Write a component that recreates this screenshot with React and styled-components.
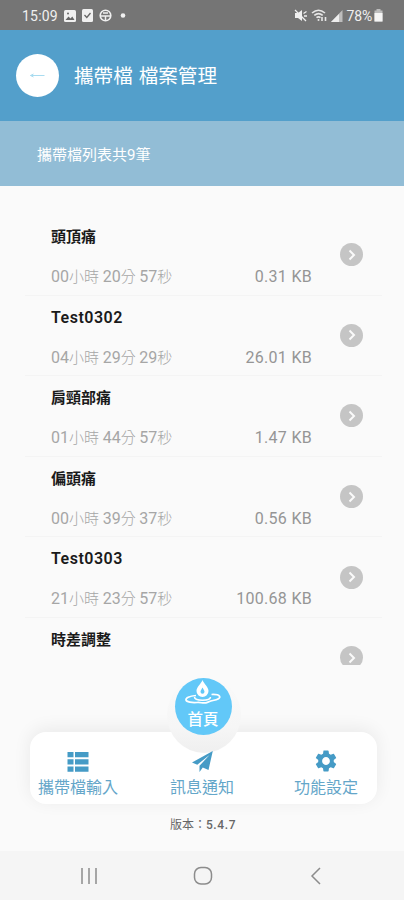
import React from 'react';
import styled, { createGlobalStyle } from 'styled-components';
import { MdSettings } from 'react-icons/md';

const GlobalStyle = createGlobalStyle`
  * {
    box-sizing: border-box;
  }
  body {
    margin: 0;
    background: #fafafa;
    font-family: Roboto, "Noto Sans CJK TC", sans-serif;
  }
`;

const Screen = styled.div`
  width: 404px;
  height: 900px;
  display: flex;
  flex-direction: column;
  overflow: hidden;
  background: #fafafa;
`;

const StatusBar = styled.div`
  height: 30px;
  flex: none;
  display: flex;
  align-items: center;
  justify-content: space-between;
  padding: 1px 21px 0 22px;
  background: #757575;
  color: #f0f0f0;
  font-size: 14px;
`;

const StatusGroup = styled.div`
  display: flex;
  align-items: center;
  gap: ${(props) => props.$gap}px;
  svg {
    display: block;
  }
`;

const Clock = styled.span`
  width: 36px;
  letter-spacing: 0.2px;
`;

const Battery = styled.span`
  letter-spacing: -0.2px;
  margin: 0 -1px 0 1px;
`;

const Header = styled.header`
  height: 91px;
  flex: none;
  display: flex;
  align-items: center;
  gap: 15px;
  padding-left: 16px;
  background: #539fcb;
`;

const BackButton = styled.button`
  width: 43px;
  height: 43px;
  padding: 0;
  border: none;
  border-radius: 50%;
  background: #fff;
  display: flex;
  align-items: center;
  justify-content: center;
`;

const Title = styled.h1`
  margin: 0;
  padding-top: 3px;
  color: #fff;
  font-size: 19.6px;
  font-weight: 400;
  line-height: 28px;
  word-spacing: 1px;
`;

const SubHeader = styled.div`
  height: 65px;
  flex: none;
  display: flex;
  align-items: center;
  padding-left: 37px;
  background: #92bdd6;
  color: #fff;
  font-size: 15px;
  font-weight: 400;
`;

const List = styled.div`
  height: 479px;
  flex: none;
  overflow: hidden;
  padding: 29px 22px 0 25px;
`;

const Row = styled.div`
  height: 80.6px;
  display: flex;
  align-items: center;
  padding: 0 19px 0 26px;
  border-bottom: 1px solid #f4f4f4;
`;

const RowText = styled.div`
  width: 261px;
  height: 100%;
  padding-top: 10px;
`;

const Name = styled.div`
  height: 24px;
  line-height: 24px;
  color: #1a1a1a;
  font-size: ${(props) => (props.$latin ? '16px' : '15px')};
  font-weight: ${(props) => (props.$latin ? 600 : 700)};
  letter-spacing: ${(props) => (props.$latin ? '0.5px' : '0')};
`;

const Meta = styled.div`
  display: flex;
  justify-content: space-between;
  height: 24px;
  margin-top: 16px;
  line-height: 24px;
  font-size: 16px;
`;

const Time = styled.span`
  color: #a6a6a6;
  white-space: pre;
`;

const Unit = styled.span`
  font-size: 15px;
  font-weight: 300;
`;

const Size = styled.span`
  color: #959595;
  letter-spacing: 0.3px;
`;

const More = styled.div`
  width: 23px;
  height: 23px;
  margin-left: 28px;
  border-radius: 50%;
  background: #c5c5c5;
  display: flex;
  align-items: center;
  justify-content: center;
`;

const Footer = styled.footer`
  flex: 1;
  padding: 67px 27px 0 30px;
`;

const TabBar = styled.nav`
  position: relative;
  height: 72px;
  display: flex;
  justify-content: space-between;
  padding: 0 11px 0 8px;
  border-radius: 16px;
  background: #fff;
  box-shadow: 0 -3px 18px rgba(0, 0, 0, 0.07);
`;

const TabItem = styled.div`
  position: relative;
  z-index: 2;
  width: 80px;
  display: flex;
  flex-direction: column;
  align-items: center;
  padding-top: 17px;
  color: #459bc6;
`;

const TabIcon = styled.div`
  height: 27px;
  display: flex;
  align-items: ${(props) => (props.$low ? 'flex-end' : 'center')};
  padding-bottom: 2px;
`;

const TabLabel = styled.span`
  font-size: 16px;
  line-height: 24px;
  color: #64a6c9;
  white-space: nowrap;
`;

// raised disc that overlaps the top edge of the tab bar
const HomeRing = styled.div`
  position: absolute;
  z-index: 1;
  left: 137px;
  top: -55px;
  width: 74px;
  height: 76px;
  padding-top: 1px;
  display: flex;
  justify-content: center;
  border-radius: 50%;
  background: linear-gradient(#fafafa 0%, #f6f6f6 65%, #efefef 100%);
`;

const HomeButton = styled.div`
  width: 57px;
  height: 57px;
  margin-right: 2px;
  border-radius: 50%;
  background: #62c8f8;
  color: #fff;
  display: flex;
  flex-direction: column;
  align-items: center;
  gap: 2px;
  padding-top: 2px;
  font-size: 15.5px;
  font-weight: 500;
  line-height: 24px;
`;

const Version = styled.div`
  margin-top: 11px;
  padding-right: 1px;
  text-align: center;
  color: #666;
  font-size: 12px;
  font-weight: 400;
  line-height: 20px;
`;

const VersionNumber = styled.span`
  font-weight: 500;
  letter-spacing: 0.6px;
`;

const SystemNav = styled.div`
  height: 49px;
  flex: none;
  display: flex;
  align-items: center;
  justify-content: space-between;
  padding: 0 82px 0 80px;
  background: #f5f5f5;
`;

const HomeKey = styled.svg`
  margin-right: 3px;
`;

const files = [
  { name: '頭頂痛', time: [['00', '小時 '], ['20', '分 '], ['57', '秒']], size: '0.31 KB' },
  { name: 'Test0302', latin: true, time: [['04', '小時 '], ['29', '分 '], ['29', '秒']], size: '26.01 KB' },
  { name: '肩頸部痛', time: [['01', '小時 '], ['44', '分 '], ['57', '秒']], size: '1.47 KB' },
  { name: '偏頭痛', time: [['00', '小時 '], ['39', '分 '], ['37', '秒']], size: '0.56 KB' },
  { name: 'Test0303', latin: true, time: [['21', '小時 '], ['23', '分 '], ['57', '秒']], size: '100.68 KB' },
  { name: '時差調整', time: [], size: '' },
];

function StatusIcons() {
  return (
    <StatusGroup $gap={6}>
      <Clock>15:09</Clock>
      <svg width="12" height="12" viewBox="0 0 12 12">
        <rect width="12" height="12" rx="1.5" fill="#f0f0f0" />
        <path d="M1.5 10l3-3.6 2 2 1.8-2L10.500 10z" fill="#666" />
        <circle cx="4" cy="3.500" r="1" fill="#666" />
      </svg>
      <svg width="11" height="13" viewBox="0 0 11 13">
        <rect width="11" height="13" rx="1.5" fill="#f0f0f0" />
        <path d="M2.500 6l2.300 2.500L8.500 4" fill="none" stroke="#666" strokeWidth="1.300" />
      </svg>
      <svg width="13" height="13" viewBox="0 0 13 13" fill="none" stroke="#f0f0f0">
        <circle cx="6.500" cy="6.500" r="5.300" strokeWidth="1.600" />
        <path d="M1 7h11M6.500 7v5M4 4h5" strokeWidth="1.500" />
      </svg>
      <svg width="14" height="5" viewBox="0 0 14 5">
        <circle cx="5" cy="2.500" r="2.300" fill="#f0f0f0" />
      </svg>
    </StatusGroup>
  );
}

function SignalIcons() {
  return (
    <StatusGroup $gap={3}>
      <svg width="14" height="13" viewBox="0 0 14 13">
        <path d="M1 4h3l4-3v11L4 9H1z" fill="#f0f0f0" />
        <path d="M1 1l11 11M9.500 4.500l3-2M10 7h3" stroke="#f0f0f0" strokeWidth="1.300" />
      </svg>
      <svg width="17" height="13" viewBox="0 0 17 13" fill="none" stroke="#e6e6e6" strokeWidth="1.600">
        <path d="M1 4Q7.500-1.500 14 4M3.300 6.400Q7.500 2.700 11.700 6.400M5.500 8.700Q7.500 7 9.500 8.700" />
        <path d="M11 8v4M14.500 12V8" />
        <circle cx="7.500" cy="11" r="1" fill="#e6e6e6" stroke="none" />
      </svg>
      <svg width="12" height="12" viewBox="0 0 12 12">
        <path d="M0 12L11.500 0v12z" fill="#bdbdbd" />
        <path d="M0 12L8 4v8z" fill="#eee" />
      </svg>
      <Battery>78%</Battery>
      <svg width="9" height="13" viewBox="0 0 9 13">
        <path d="M2.500 0h4v1.500H8.500V12.500H.500V1.500h2z" fill="#bdbdbd" />
        <path d="M.500 4h8v8.500h-8z" fill="#f5f5f5" />
      </svg>
    </StatusGroup>
  );
}

function FileRow({ file }) {
  return (
    <Row>
      <RowText>
        <Name $latin={file.latin}>{file.name}</Name>
        <Meta>
          <Time>
            {file.time.map(([value, unit]) => (
              <React.Fragment key={unit}>
                {value}
                <Unit>{unit}</Unit>
              </React.Fragment>
            ))}
          </Time>
          <Size>{file.size}</Size>
        </Meta>
      </RowText>
      <More>
        <svg width="10" height="12" viewBox="0 0 10 12">
          <path d="M2.500 1.500L7 6 2.500 10.500" fill="none" stroke="#fafafa" strokeWidth="2" />
        </svg>
      </More>
    </Row>
  );
}

function ListIcon() {
  return (
    <svg width="22" height="20" viewBox="0 0 22 20" fill="#459bc6">
      <path d="M.500 0h6v5.300h-6zM8 0h13.500v5.300H8zM.500 7.200h6v5.300h-6zM8 7.200h13.500v5.300H8zM.500 14.400h6v5.300h-6zM8 14.400h13.500v5.300H8z" />
    </svg>
  );
}

function PlaneIcon() {
  return (
    <svg width="21" height="21" viewBox="0 0 21 21" fill="#459bc6">
      <path d="M20.800 0L0 11.500l5.300 2.200L17.500 4 7.500 14.800V21l3.300-4.500 5.700 2.400z" />
    </svg>
  );
}

function DropIcon() {
  return (
    <svg width="38" height="26" viewBox="0 0 38 26">
      <path
        d="M12 15.500C5 16 1.500 18 2 20c.500 2 6 3 11 2.500 4-.400 5 1 9 .300 3-.500 3-1.800 7-2.300 5-.700 7.500-2.500 6.500-4.200-1-1.600-4-2-8-1.800"
        fill="none"
        stroke="#fff"
        strokeWidth="1.700"
      />
      <path d="M10.500 17c0 4.300 16 4.300 16 0" fill="none" stroke="#fff" strokeWidth="1.500" />
      <path d="M18.500 0c1.500 4 6 7 6 11a6 6 0 0 1-12 0c0-4 4.500-7 6-11z" fill="#fff" />
      <path d="M18.500 7.500c.600 1.600 2 2.700 2 4.200a2 2 0 0 1-4 0c0-1.500 1.400-2.600 2-4.200z" fill="#62c8f8" />
    </svg>
  );
}

export default function App() {
  return (
    <>
      <GlobalStyle />
      <Screen>
        <StatusBar>
          <StatusIcons />
          <SignalIcons />
        </StatusBar>

        <Header>
          <BackButton aria-label="返回">
            <svg width="17" height="7" viewBox="0 0 17 7" fill="none" stroke="#a9dcf0">
              <path d="M1.500 3.500h14M4.500 2l-3 1.500 3 1.500" />
            </svg>
          </BackButton>
          <Title>攜帶檔 檔案管理</Title>
        </Header>
        <SubHeader>攜帶檔列表共9筆</SubHeader>

        <List>
          {files.map((file) => (
            <FileRow key={file.name} file={file} />
          ))}
        </List>

        <Footer>
          <TabBar>
            <HomeRing>
              <HomeButton>
                <DropIcon />
                首頁
              </HomeButton>
            </HomeRing>
            <TabItem>
              <TabIcon><ListIcon /></TabIcon>
              <TabLabel>攜帶檔輸入</TabLabel>
            </TabItem>
            <TabItem>
              <TabIcon><PlaneIcon /></TabIcon>
              <TabLabel>訊息通知</TabLabel>
            </TabItem>
            <TabItem>
              <TabIcon $low><MdSettings size={26} /></TabIcon>
              <TabLabel>功能設定</TabLabel>
            </TabItem>
          </TabBar>
          <Version>
            版本：<VersionNumber>5.4.7</VersionNumber>
          </Version>
        </Footer>

        <SystemNav>
          <svg width="18" height="18" viewBox="0 0 18 18" stroke="#8c8c8c" strokeWidth="1.500">
            <path d="M2 1v16M9 1v16M16 1v16" />
          </svg>
          <HomeKey width="20" height="20" viewBox="0 0 20 20" fill="none" stroke="#8c8c8c" strokeWidth="1.500">
            <rect x="1.500" y="1.500" width="17" height="16.500" rx="6.500" />
          </HomeKey>
          <svg width="12" height="18" viewBox="0 0 12 18" fill="none" stroke="#8c8c8c" strokeWidth="1.500">
            <path d="M10 1L2 9l8 8" />
          </svg>
        </SystemNav>
      </Screen>
    </>
  );
}
